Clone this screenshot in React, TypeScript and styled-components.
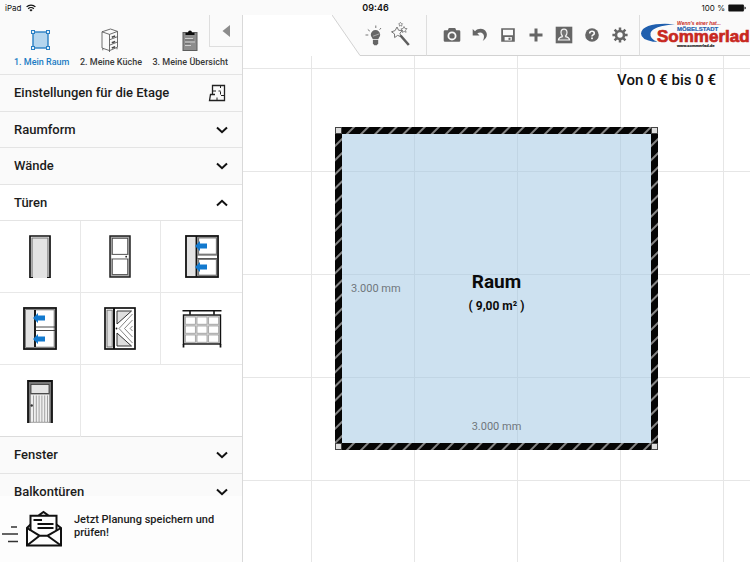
import React from "react";
import styled, { createGlobalStyle } from "styled-components";

const GlobalStyle = createGlobalStyle`
  * { box-sizing: border-box; }
  html, body, #root { height: 100%; margin: 0; }
  body { background: #fff; color: #1c1c1c; font-family: Roboto, "Open Sans", sans-serif; overflow: hidden; }
  button { font: inherit; color: inherit; background: none; border: 0; padding: 0; margin: 0; cursor: pointer; }
  svg { display: block; flex: none; }
  h1, h2, p { margin: 0; font-weight: inherit; }
`;

const Page = styled.div`
  display: flex;
  flex-direction: column;
  height: 100vh;
`;

const StatusBar = styled.header`
  display: grid;
  grid-template-columns: 1fr auto 1fr;
  align-items: center;
  height: 15px;
  padding: 0 4px 0 5px;
  background: #fafafa;
  color: #111;
  font-family: Inter, sans-serif;
  font-size: 8px;
  line-height: 12px;
`;

const StatusGroup = styled.div<{ $end?: boolean }>`
  display: flex;
  align-items: center;
  gap: ${(p) => (p.$end ? 3 : 5)}px;
  justify-content: ${(p) => (p.$end ? "flex-end" : "flex-start")};
`;

const Clock = styled.time`
  font-size: 9px;
  font-weight: 600;
`;

const Body = styled.div`
  display: flex;
  flex: 1;
  min-height: 0;
`;

const Sidebar = styled.aside`
  display: flex;
  flex-direction: column;
  width: 243px;
  flex: none;
  background: #fafafa;
  border-right: 1px solid #d9d9d9;
  position: relative;
`;

const Steps = styled.nav`
  display: flex;
  justify-content: space-between;
  height: 60px;
  flex: none;
  padding: 13px 14px 0;
  border-bottom: 1px solid #e4e4e4;
`;

const Step = styled.button<{ $active?: boolean }>`
  display: flex;
  flex-direction: column;
  align-items: center;
  gap: 4px;
  font-size: 9px;
  line-height: 12px;
  font-weight: 500;
  white-space: nowrap;
  color: ${(p) => (p.$active ? "#1c7cc4" : "#3a3a3a")};
  align-self: flex-start;
`;

const CollapseButton = styled.button`
  position: absolute;
  top: 0;
  right: 0;
  display: grid;
  place-items: center;
  width: 33px;
  height: 32px;
  background: #fafafa;
  border-left: 1px solid #dedede;
  border-bottom: 1px solid #dedede;
`;

const Sections = styled.div`
  flex: 1;
  min-height: 0;
  overflow: hidden;
`;

const RowGroup = styled.div<{ $rows: number }>`
  display: grid;
  grid-template-rows: repeat(${(p) => p.$rows}, 1fr);
  height: ${(p) => (p.$rows * 73) / 2}px;
`;

const Row = styled.button<{ $open?: boolean }>`
  display: flex;
  align-items: center;
  justify-content: space-between;
  width: 100%;
  padding: 1px 14px 0;
  font-size: 13px;
  line-height: 16px;
  font-weight: 500;
  text-align: left;
  background: ${(p) => (p.$open ? "#fff" : "#fafafa")};
  border-bottom: 1px solid #e4e4e4;
`;

const Tiles = styled.div`
  display: grid;
  grid-template-columns: repeat(3, 1fr);
  grid-auto-rows: 72px;
  background: #fff;
`;

const Tile = styled.button`
  display: grid;
  place-items: center;
  border-right: 1px solid #e8e8e8;
  border-bottom: 1px solid #e8e8e8;
  &:nth-child(3n) { border-right: 0; }
  &:last-child { border-bottom: 0; }
`;

const TilesEnd = styled.hr`
  height: 1px;
  margin: -1px 0 0;
  border: 0;
  background: #dcdcdc;
`;

const SaveBanner = styled.button`
  display: flex;
  align-items: flex-start;
  gap: 12px;
  flex: none;
  height: 66px;
  padding: 14px 16px 0 1px;
  background: #fdfdfd;
  text-align: left;
  font-size: 11px;
  line-height: 13px;
  font-weight: 500;
`;

const BannerText = styled.span`
  padding-top: 3px;
`;

const Workspace = styled.main`
  display: grid;
  flex: 1;
  min-width: 0;
  background-color: #fff;
  background-image:
    linear-gradient(to right, #e6e6e6 1px, transparent 1px),
    linear-gradient(to bottom, #e6e6e6 1px, transparent 1px);
  background-size: 103px 103px;
  background-position: 68px 53px;
`;

const TopLayer = styled.div`
  grid-area: 1 / 1;
  align-self: start;
  display: flex;
  flex-direction: column;
  min-width: 0;
`;

const Toolbar = styled.div`
  display: flex;
  height: 41px;
  padding-left: 89px;
  overflow: hidden;
  background: linear-gradient(#fff, #fff) left / 89px 100% no-repeat;
`;

const ToolGroup = styled.div<{ $grow?: boolean }>`
  display: flex;
  align-items: center;
  justify-content: center;
  flex: ${(p) => (p.$grow ? "1" : "none")};
  padding: ${(p) => (p.$grow ? "0 0 0 5px" : "0 10px 0 0")};
  background: #fafafa;
  border-right: 1px solid #dedede;
  border-bottom: 1px solid #d2d2d2;
`;

const ToolButton = styled.button`
  display: grid;
  place-items: center;
  width: 28px;
  height: 40px;
`;

const Brand = styled.a`
  display: block;
  flex: none;
  width: 110px;
  overflow: hidden;
  background: #fafafa;
  border-bottom: 1px solid #d2d2d2;
`;

const Price = styled.p`
  align-self: flex-end;
  padding: 14px 34px 0 0;
  font-size: 15px;
  line-height: 20px;
  font-weight: 500;
  color: #111;
`;

const Room = styled.section`
  grid-area: 1 / 1;
  place-self: center;
  display: grid;
  grid-template: 7px 1fr 7px / 7px 1fr 7px;
  width: 323px;
  aspect-ratio: 1;
`;

const Wall = styled.div`
  background: repeating-linear-gradient(135deg, #050505 0 7px, #858585 8px 9px, #050505 10px);
`;

const Corner = styled.div`
  background: #ddd;
  border: 1px solid #444;
`;

const Floor = styled.div`
  display: grid;
  grid-template: 1fr auto 1fr / 1fr auto 1fr;
  padding: 8px 9px;
  background: rgba(155, 195, 225, 0.5);
  text-align: center;
`;

const Measure = styled.span<{ $bottom?: boolean }>`
  grid-area: ${(p) => (p.$bottom ? "3 / 2" : "2 / 1")};
  align-self: ${(p) => (p.$bottom ? "end" : "center")};
  justify-self: ${(p) => (p.$bottom ? "center" : "start")};
  font-size: 11px;
  line-height: 16px;
  color: #70777c;
`;

const RoomLabel = styled.div`
  grid-area: 2 / 2;
  padding-top: 6px;
  color: #0b0b0b;
`;

const RoomName = styled.h1`
  font-size: 19px;
  line-height: 24px;
  font-weight: 700;
`;

const RoomArea = styled.p`
  padding-top: 4px;
  font-size: 12px;
  line-height: 16px;
  font-weight: 700;
`;

const Chevron = ({ up }: { up?: boolean }) => (
  <svg width="12" height="8" viewBox="0 0 12 8" fill="none" stroke="#111" strokeWidth="2">
    <path d={up ? "M1 6.5 6 1.8l5 4.7" : "M1 1.5 6 6.2l5-4.7"} />
  </svg>
);

const Wifi = () => (
  <svg width="10" height="8" viewBox="0 0 10 8" fill="none" stroke="#111" strokeWidth="1.3">
    <path d="M.6 2.9a6.2 6.2 0 0 1 8.8 0M2.2 4.7a4 4 0 0 1 5.6 0" />
    <path d="M5 7.6 3.4 6a2.3 2.3 0 0 1 3.2 0Z" fill="#111" stroke="none" />
  </svg>
);

const Battery = () => (
  <svg width="18" height="8" viewBox="0 0 18 8">
    <rect x=".3" y=".5" width="15.6" height="7" rx="1" fill="#111" />
    <path d="M16.5 2.6q1.3.3 1.3 1.4t-1.3 1.4Z" fill="#111" />
  </svg>
);

const RoomIcon = () => (
  <svg width="24" height="24" viewBox="0 0 24 24" stroke="#2a7fc4">
    <rect x="3" y="4" width="15" height="16" fill="#b4d5ee" strokeWidth="1.4" />
    <g fill="#e6f2fb" strokeWidth="1">
      <rect x="1.500" y="2.5" width="3" height="3" />
      <rect x="16.500" y="2.5" width="3" height="3" />
      <rect x="1.500" y="18.500" width="3" height="3" />
      <rect x="16.500" y="18.500" width="3" height="3" />
    </g>
  </svg>
);

const CabinetIcon = () => (
  <svg width="20" height="24" viewBox="0 0 20 24" fill="none" stroke="#4a4a4a" strokeWidth=".8" strokeLinejoin="round">
    <path d="M1 3.800 9.500 1l7 2.400L8.500 6.400ZM1 3.800V20l7.500 2.600V6.400M16.500 3.400v15.800l-8 3.400M1.800 20.500v1.800M8.500 22.500V24M16 19.500v1.800" />
    <path d="m8.500 11.800 8-3.100M8.500 17.200l8-3.200" />
    <path d="m10.800 9.300 3.400-1.300M10.800 14.800l3.400-1.300M10.800 20l3.400-1.300" strokeWidth="1.500" />
  </svg>
);

const ClipboardIcon = () => (
  <svg width="18" height="24" viewBox="0 0 18 24">
    <rect x="2" y="4.500" width="14" height="18" fill="#8d8d8d" stroke="#5c5c5c" />
    <path d="M4.500 7V4.700H7Q7 2.500 9 2.500t2 2.200h2.500V7Z" fill="#0d0d0d" />
    <path d="M4 10.500h8M4 14h10M4 17.500h6" stroke="#d0d0d0" strokeWidth="1.100" />
    <path d="M4 12h9M4 15.700h5" stroke="#5f5f5f" strokeWidth=".7" />
  </svg>
);

const PlanIcon = () => (
  <svg width="20" height="18" viewBox="0 0 20 18" fill="none" stroke="#222" strokeWidth="1.300">
    <path d="M4.500 10.500V1.500h12v15h-15l1-6h4.500" />
    <path d="M9 16.500V13.500M16.500 11.500h-3.500M12.500 1.500V4M12.500 7.500v3M4.500 7h3.500M10.500 7h2" strokeWidth="1" />
  </svg>
);

const LampIcon = () => (
  <svg width="20" height="24" viewBox="0 0 20 24" fill="#666">
    <path d="M11.500 7a4.700 4.700 0 0 1 4.700 4.700c0 1.900-1.400 2.700-1.800 4.300H8.700c-.4-1.600-1.900-2.400-1.900-4.300A4.700 4.700 0 0 1 11.500 7Z" />
    <path d="M8.900 16.800h5.300v3.500l-1.300 2h-2.700l-1.300-2Z" />
    <path d="m9 13.200 6.500-2.400" stroke="#c9c9c9" strokeWidth=".7" />
    <path d="M1.500 12h2.800M3.800 6.500l2 1.600M11.800 2.500V5M17 5l-1.400 1.700" stroke="#777" strokeWidth="1" />
  </svg>
);

const WandIcon = () => (
  <svg width="22" height="26" viewBox="0 0 22 26" fill="none" stroke="#777" strokeWidth="1">
    <path d="m6 5 1.600 3.300 3.700.2-2.400 2.700 1.200 3.500-3.500-1.300-3 2.200-.1-3.700-3-2.100 3.600-1.200Z" />
    <path d="m13 4.500.9 1.900 2.100.2-1.500 1.600.6 2.100-2-.9-1.800 1.100.2-2.200-1.600-1.400 2.200-.4ZM8.600 1.500l.8-1.200.9 1.200 1.300.3-.9 1 .2 1.300-1.300-.5-1.200.5.100-1.300-.9-1Z" strokeWidth=".8" />
    <path d="m9.500 13.500 8.300 9.500" stroke="#5e5e5e" strokeWidth="2.600" />
  </svg>
);

const CameraIcon = () => (
  <svg width="18" height="16" viewBox="0 0 18 16" fill="#666">
    <path fillRule="evenodd" d="M5.800 1h6.400l1 2.200H16q1.300 0 1.300 1.300v9q0 1.300-1.300 1.300H2Q.7 14.800.7 13.500v-9Q.7 3.200 2 3.200h2.800ZM9 4.400a4.500 4.500 0 1 0 0 9 4.500 4.500 0 0 0 0-9Z" />
    <circle cx="9" cy="8.900" r="2.700" />
  </svg>
);

const UndoIcon = () => (
  <svg width="16" height="16" viewBox="0 0 16 16" fill="#666">
    <path d="M.7 2v6.500h6.800L5.300 6.300q3.400-1.800 5.600.4 2.300 2.600-.2 7.300 5.700-4.200 3.600-8.800C11.800.8 6.300 1 3 4.200Z" />
  </svg>
);

const SaveIcon = () => (
  <svg width="16" height="16" viewBox="0 0 16 16">
    <path fill="#666" fillRule="evenodd" d="M1.200 1.200h13.600v13.600H1.200ZM3 2.800v5.400h10V2.800ZM4.600 10v3.600h7.200V10Z" />
    <rect x="8.500" y="10.700" width="2" height="2.200" fill="#666" />
  </svg>
);

const PlusIcon = () => (
  <svg width="16" height="16" viewBox="0 0 16 16" stroke="#666" strokeWidth="3">
    <path d="M8 1.500v13M1.500 8h13" />
  </svg>
);

const PersonIcon = () => (
  <svg width="18" height="18" viewBox="0 0 18 18">
    <rect x=".7" y=".7" width="16.600" height="16.600" fill="#666" />
    <path d="M9 3.200q3 0 3 3.300 0 2-1.300 3.200v1q3.600.8 3.900 3.300H3.400q.3-2.500 3.900-3.300v-1Q6 8.500 6 6.500q0-3.300 3-3.300Z" fill="#777" stroke="#f4f4f4" strokeWidth="1.200" />
  </svg>
);

const HelpIcon = () => (
  <svg width="16" height="16" viewBox="0 0 16 16" fill="none">
    <circle cx="8" cy="8" r="6.800" fill="#666" />
    <path d="M5.700 6.500Q5.700 4.300 8 4.300t2.300 1.900Q10.300 7.300 9 7.900q-1 .5-1 1.500" stroke="#fafafa" strokeWidth="1.600" />
    <rect x="7.100" y="10.500" width="1.800" height="1.700" fill="#fafafa" />
  </svg>
);

const GearIcon = () => (
  <svg width="16" height="16" viewBox="0 0 16 16" stroke="#666">
    <circle cx="8" cy="8" r="4" fill="none" strokeWidth="2.600" />
    <path d="M8 .4v3M8 12.600v3M.4 8h3M12.600 8h3M2.600 2.600l2.200 2.200M11.200 11.200l2.200 2.200M13.400 2.600l-2.200 2.200M4.800 11.200l-2.200 2.200" strokeWidth="2.500" />
  </svg>
);

const BrandLogo = () => (
  <svg width="110" height="40" viewBox="0 0 110 40" fontFamily="Liberation Sans, sans-serif" fontWeight="700">
    <path d="M35 9.300C18 7.500 1.500 10 1 18.500q0 6 12 8.200h4.500Q9.500 24 10.500 18 13 11 35 9.300Z" fill="#1f5fae" />
    <text x="37" y="10" fontSize="5" fontStyle="italic" fill="#c92a23">Wenn's einer hat...</text>
    <text x="37" y="16" fontSize="6" fill="#1f5fae" stroke="#1f5fae" strokeWidth=".2">MÖBELSTADT</text>
    <text x="17" y="27" fontSize="17" fill="#c8281f" stroke="#c8281f" strokeWidth=".7">Sommerlad</text>
    <text x="37" y="32" fontSize="4" fill="#222" stroke="#222" strokeWidth=".2">www.sommerlad.de</text>
  </svg>
);

const arrow = "M0 5 5 0v2.500h7v5H5V10Z";

const OpeningDoor = () => (
  <svg width="22" height="43" viewBox="0 0 22 43" fill="none">
    <path d="M3 43V3h16v40" fill="#e3e3e3" stroke="#777" strokeWidth="1.200" />
    <path d="M1 43V1h20v42" stroke="#111" strokeWidth="1.700" />
    <path d="M1 42.500h3M18 42.500h3" stroke="#111" />
  </svg>
);

const PanelDoor = () => (
  <svg width="22" height="43" viewBox="0 0 22 43" fill="none">
    <rect x="1" y="1" width="20" height="41" fill="#aaa" stroke="#222" strokeWidth="1.500" />
    <g fill="#fff" stroke="#444" strokeWidth=".8">
      <rect x="3.300" y="3.300" width="15.400" height="16" />
      <rect x="3.300" y="24" width="15.400" height="15.500" />
    </g>
    <rect x="2.300" y="20" width="17.400" height="3.300" fill="#fff" />
    <circle cx="17.200" cy="21.700" r=".9" fill="#222" />
  </svg>
);

const SlidingDoor = ({ framed }: { framed?: boolean }) => (
  <svg width="34" height="43" viewBox="0 0 34 43" fill="none">
    <rect x="1" y="1" width="32" height="41" fill="#fff" stroke="#111" strokeWidth="1.800" />
    {framed && <rect x="2.700" y="2.700" width="28.600" height="37.600" stroke="#777" strokeWidth="1.200" />}
    <rect x={framed ? 3 : 2} y={framed ? 3 : 2} width="9" height={framed ? 37 : 39} fill="#e3e3e3" />
    <path d={framed ? "M12 3v37" : "M11.500 1v41"} stroke="#111" strokeWidth="1.900" />
    <path d="M12.500 20h20M12.500 23.500h20" stroke="#333" strokeWidth=".9" />
    {!framed && (
      <g stroke="#777" strokeWidth="1.300">
        <rect x="13.500" y="2.800" width="18" height="16.500" />
        <rect x="13.500" y="24.300" width="18" height="16" />
      </g>
    )}
    <g fill="#1279ce">
      <path transform="translate(10 6)" d={arrow} />
      <path transform="translate(10 27)" d={arrow} />
    </g>
  </svg>
);

const ChevronDoor = () => (
  <svg width="32" height="43" viewBox="0 0 32 43" fill="none">
    <rect x="1" y="1" width="30" height="41" fill="#fff" stroke="#111" strokeWidth="1.700" />
    <rect x="3" y="3.200" width="5.200" height="36.800" fill="#e0e0e0" stroke="#777" />
    <path d="M10 1v41" stroke="#111" strokeWidth="2" />
    <path d="M13 4h14.500L13 17ZM13 39h14.500L13 26Z" fill="#dedede" stroke="#333" />
    <path d="M28.500 7 15 21.500 28.500 36M28.500 13l-8 8.500 8 8.500M28.500 19l-2.300 2.500 2.300 2.500" stroke="#666" strokeWidth=".8" />
    <circle cx="12.500" cy="21.500" r=".9" fill="#222" />
  </svg>
);

const GridDoor = () => (
  <svg width="40" height="43" viewBox="0 0 40 43" fill="none">
    <path d="M.5 3.800h39M8 3.800v4M32 3.800v4" stroke="#111" strokeWidth="1.600" />
    <rect x="1.500" y="8" width="37" height="29" fill="#d6d6d6" stroke="#111" strokeWidth="1.400" />
    <path d="M1.500 37v3.500M38.500 37v3.500" stroke="#111" strokeWidth="1.700" />
    <g fill="#fff" stroke="#909090" strokeWidth=".7">
      {[3.300, 15, 26.700].map((x) => [10, 19, 28].map((y) => <rect key={`${x}-${y}`} x={x} y={y} width="10" height="7.200" />))}
    </g>
  </svg>
);

const PlankDoor = () => (
  <svg width="26" height="43" viewBox="0 0 26 43" fill="none">
    <path d="M1 43V1h24v42" fill="#777" stroke="#111" strokeWidth="1.800" />
    <rect x="4" y="4.500" width="18" height="9" fill="#e4e4e4" stroke="#333" strokeWidth=".8" />
    <path d="M3.700 14.500h18.600V43H3.700Z" fill="#efefef" />
    <path d="M6.500 15.500V42M9.300 15.500V42M12.100 15.500V42M14.900 15.500V42M17.700 15.500V42M20.500 15.500V42M3.700 42.300h18.600" stroke="#808080" strokeWidth=".7" />
    <circle cx="4.700" cy="25.500" r="1.200" fill="#333" />
  </svg>
);

const MailIcon = () => (
  <svg width="61" height="38" viewBox="0 0 61 38" fill="none" stroke="#111" strokeWidth="2">
    <path d="M10 17h6M1 24h16M7 31.500h10" stroke="#333" strokeWidth="1.600" />
    <path d="M29.500 14.500 26 18v17.500h34V18l-4.500-3.500" />
    <path d="M29.500 21V5.700h26V21M37.500 5.500 42.500 2l5 3.500" />
    <path d="m26 18 12.500 7.700h8L60 18M26 35.500l12.500-9.800M60 35.500l-13.500-9.800" />
    <path d="M32.500 10h8.500M36.500 14h16M36.500 18h16" />
  </svg>
);

const steps = [
  { label: "1. Mein Raum", icon: <RoomIcon />, active: true },
  { label: "2. Meine Küche", icon: <CabinetIcon /> },
  { label: "3. Meine Übersicht", icon: <ClipboardIcon /> },
];

const doors = [
  { name: "Durchgang", icon: <OpeningDoor /> },
  { name: "Zimmertür", icon: <PanelDoor /> },
  { name: "Schiebetür vor der Wand", icon: <SlidingDoor /> },
  { name: "Schiebetür in der Wand", icon: <SlidingDoor framed /> },
  { name: "Falttür", icon: <ChevronDoor /> },
  { name: "Garagentor", icon: <GridDoor /> },
  { name: "Haustür", icon: <PlankDoor /> },
];

const tools = [
  { name: "Foto", icon: <CameraIcon /> },
  { name: "Rückgängig", icon: <UndoIcon /> },
  { name: "Speichern", icon: <SaveIcon /> },
  { name: "Neu", icon: <PlusIcon /> },
  { name: "Konto", icon: <PersonIcon /> },
  { name: "Hilfe", icon: <HelpIcon /> },
  { name: "Optionen", icon: <GearIcon /> },
];

export default function App() {
  return (
    <Page>
      <GlobalStyle />
      <StatusBar>
        <StatusGroup>iPad <Wifi /></StatusGroup>
        <Clock>09:46</Clock>
        <StatusGroup $end>100 % <Battery /></StatusGroup>
      </StatusBar>
      <Body>
        <Sidebar>
          <Steps>
            {steps.map((s) => (
              <Step key={s.label} $active={s.active}>
                {s.icon}
                {s.label}
              </Step>
            ))}
          </Steps>
          <CollapseButton aria-label="Seitenleiste einklappen">
            <svg width="8" height="12" viewBox="0 0 8 12"><path d="M8 0v12L.5 6Z" fill="#8c8c8c" /></svg>
          </CollapseButton>
          <Sections>
            <RowGroup $rows={4}>
              <Row>Einstellungen für die Etage <PlanIcon /></Row>
              <Row aria-expanded={false}>Raumform <Chevron /></Row>
              <Row aria-expanded={false}>Wände <Chevron /></Row>
              <Row aria-expanded $open>Türen <Chevron up /></Row>
            </RowGroup>
            <Tiles>
              {doors.map((d) => <Tile key={d.name} aria-label={d.name}>{d.icon}</Tile>)}
            </Tiles>
            <TilesEnd />
            <RowGroup $rows={2}>
              <Row aria-expanded={false}>Fenster <Chevron /></Row>
              <Row aria-expanded={false}>Balkontüren <Chevron /></Row>
            </RowGroup>
          </Sections>
          <SaveBanner>
            <MailIcon />
            <BannerText>Jetzt Planung speichern und prüfen!</BannerText>
          </SaveBanner>
        </Sidebar>
        <Workspace>
          <Room>
            <Corner /><Wall /><Corner />
            <Wall />
            <Floor>
              <Measure>3.000 mm</Measure>
              <RoomLabel>
                <RoomName>Raum</RoomName>
                <RoomArea>( 9,00 m² )</RoomArea>
              </RoomLabel>
              <Measure $bottom>3.000 mm</Measure>
            </Floor>
            <Wall />
            <Corner /><Wall /><Corner />
          </Room>
          <TopLayer>
            <Toolbar>
              <svg width="28" height="41" viewBox="0 0 28 41">
                <path d="M0 0h28v41Z" fill="#fafafa" />
                <path d="m0 0 28 40.500" stroke="#d2d2d2" />
              </svg>
              <ToolGroup>
                <ToolButton aria-label="Tipps"><LampIcon /></ToolButton>
                <ToolButton aria-label="Assistent"><WandIcon /></ToolButton>
              </ToolGroup>
              <ToolGroup $grow>
                {tools.map((t) => <ToolButton key={t.name} aria-label={t.name}>{t.icon}</ToolButton>)}
              </ToolGroup>
              <Brand href="#" aria-label="Möbelstadt Sommerlad"><BrandLogo /></Brand>
            </Toolbar>
            <Price>Von 0 € bis 0 €</Price>
          </TopLayer>
        </Workspace>
      </Body>
    </Page>
  );
}
